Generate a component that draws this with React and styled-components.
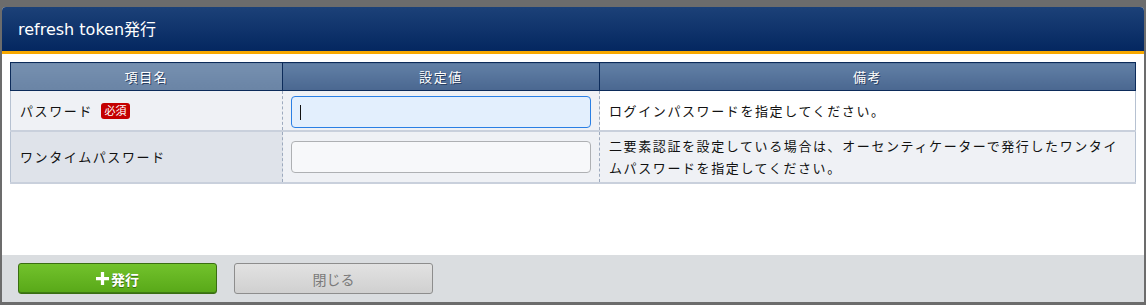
import React from "react";
import styled, { createGlobalStyle } from "styled-components";

const GlobalStyle = createGlobalStyle`
  html, body {
    margin: 0;
    padding: 0;
    background: #6c6c6c;
  }
  body {
    font-family: "Noto Sans CJK JP", "Noto Sans", sans-serif;
  }
`;

const Page = styled.div`
  padding: 7px 2px 3px 2px;
`;

const Dialog = styled.div`
  height: 295px;
  display: flex;
  flex-direction: column;
  background: #ffffff;
  border-radius: 4px 4px 0 0;
  overflow: hidden;
`;

const Header = styled.div`
  height: 47px;
  display: flex;
  align-items: center;
  padding-left: 16px;
  padding-bottom: 2px;
  box-sizing: border-box;
  background: linear-gradient(#1c4178, #042760);
  border-bottom: 3px solid #f7a800;
  color: #ffffff;
  font-family: "DejaVu Sans", "Noto Sans CJK JP", sans-serif;
  font-size: 16px;
`;

const Body = styled.div`
  flex: 1;
  padding: 8px;
`;

const Table = styled.table`
  width: 100%;
  border-collapse: collapse;
  table-layout: fixed;
  font-size: 13px;
  letter-spacing: 1.6px;
  color: #111;
`;

const HeadCell = styled.th`
  height: 27px;
  padding: 0;
  font-weight: normal;
  color: #ffffff;
  text-shadow: 1px 1px 0 #2b3f60;
  border: 1px solid #0c2b5a;
  background: ${(p) =>
    p.$first
      ? "linear-gradient(#7690b0, #6a84a5)"
      : "linear-gradient(#6280a6, #4a6790)"};
`;

const Row = styled.tr`
  border-bottom: 2px solid #c9d0dc;
`;

const Cell = styled.td`
  padding: ${(p) => p.$pad || "0 9px"};
  background: ${(p) => p.$bg};
  border-left: ${(p) => (p.$edge ? "1px solid #b6c1d1" : "1px dashed #9daabe")};
  border-right: ${(p) => (p.$last ? "1px solid #b6c1d1" : "none")};
  vertical-align: middle;
  line-height: 22px;
`;

const Label = styled.div`
  display: flex;
  align-items: center;
`;

const Badge = styled.span`
  margin-left: 8px;
  width: 29px;
  height: 16px;
  display: inline-flex;
  align-items: center;
  justify-content: center;
  background: #c40000;
  color: #ffffff;
  border-radius: 3px;
  font-size: 11px;
  letter-spacing: 0;
  line-height: 1;
`;

const InputWrap = styled.div`
  position: relative;
  width: 300px;
`;

const Input = styled.input`
  box-sizing: border-box;
  width: 300px;
  height: 32px;
  margin: 0;
  border-radius: 4px;
  outline: none;
  font-size: 13px;
  padding: 0 8px;
  border: ${(p) => (p.$active ? "1.5px solid #2a7fe4" : "1px solid #aeb0b3")};
  background: ${(p) => (p.$active ? "#e3effd" : "#f7f8fa")};
  caret-color: transparent;
`;

const Caret = styled.span`
  position: absolute;
  left: 9px;
  top: 9px;
  width: 1px;
  height: 15px;
  background: #111;
`;

const Footer = styled.div`
  height: 47px;
  box-sizing: border-box;
  padding: 8px 16px;
  background: #dadde0;
  display: flex;
  gap: 17px;
`;

const Button = styled.button`
  width: 199px;
  height: 31px;
  border-radius: 3px;
  font-family: "Noto Sans CJK JP", sans-serif;
  font-size: 14px;
  display: flex;
  align-items: center;
  justify-content: center;
  gap: 2px;
  cursor: pointer;
  ${(p) =>
    p.$primary
      ? `
    background: linear-gradient(#72c22c, #58a818);
    border: 1px solid #3a6e12;
    box-shadow: inset 0 -1px 0 #3f7c14;
    color: #ffffff;
    font-weight: bold;
    text-shadow: 0 1px 0 #3c6e14;
  `
      : `
    background: linear-gradient(#e2e2e2, #d0d0d0);
    border: 1px solid #8d8d8d;
    color: #7a7a7a;
  `}
`;

const PlusIcon = () => (
  <svg width="13" height="13" viewBox="0 0 12 12">
    <path d="M4.5 0h3v4.5H12v3H7.5V12h-3V7.5H0v-3h4.5z" fill="#ffffff" />
  </svg>
);

export default function App() {
  return (
    <Page>
      <GlobalStyle />
      <Dialog>
        <Header>refresh token発行</Header>
        <Body>
          <Table>
            <colgroup>
              <col style={{ width: 272 }} />
              <col style={{ width: 317 }} />
              <col />
            </colgroup>
            <thead>
              <tr>
                <HeadCell $first>項目名</HeadCell>
                <HeadCell>設定値</HeadCell>
                <HeadCell>備考</HeadCell>
              </tr>
            </thead>
            <tbody>
              <Row>
                <Cell $edge $bg="#eff1f5" $pad="0 9px">
                  <Label>
                    パスワード<Badge>必須</Badge>
                  </Label>
                </Cell>
                <Cell $bg="#eff1f5" $pad="5px 8px 2px">
                  <InputWrap>
                    <Input type="password" $active />
                    <Caret />
                  </InputWrap>
                </Cell>
                <Cell $last $bg="#ffffff">
                  ログインパスワードを指定してください。
                </Cell>
              </Row>
              <Row>
                <Cell $edge $bg="#dfe3ea">
                  ワンタイムパスワード
                </Cell>
                <Cell $bg="#eff1f5" $pad="3px 8px">
                  <Input type="text" />
                </Cell>
                <Cell $last $bg="#eff1f5" $pad="3px 9px">
                  二要素認証を設定している場合は、オーセンティケーターで発行したワンタイムパスワードを指定してください。
                </Cell>
              </Row>
            </tbody>
          </Table>
        </Body>
        <Footer>
          <Button $primary>
            <PlusIcon />
            発行
          </Button>
          <Button>閉じる</Button>
        </Footer>
      </Dialog>
    </Page>
  );
}
